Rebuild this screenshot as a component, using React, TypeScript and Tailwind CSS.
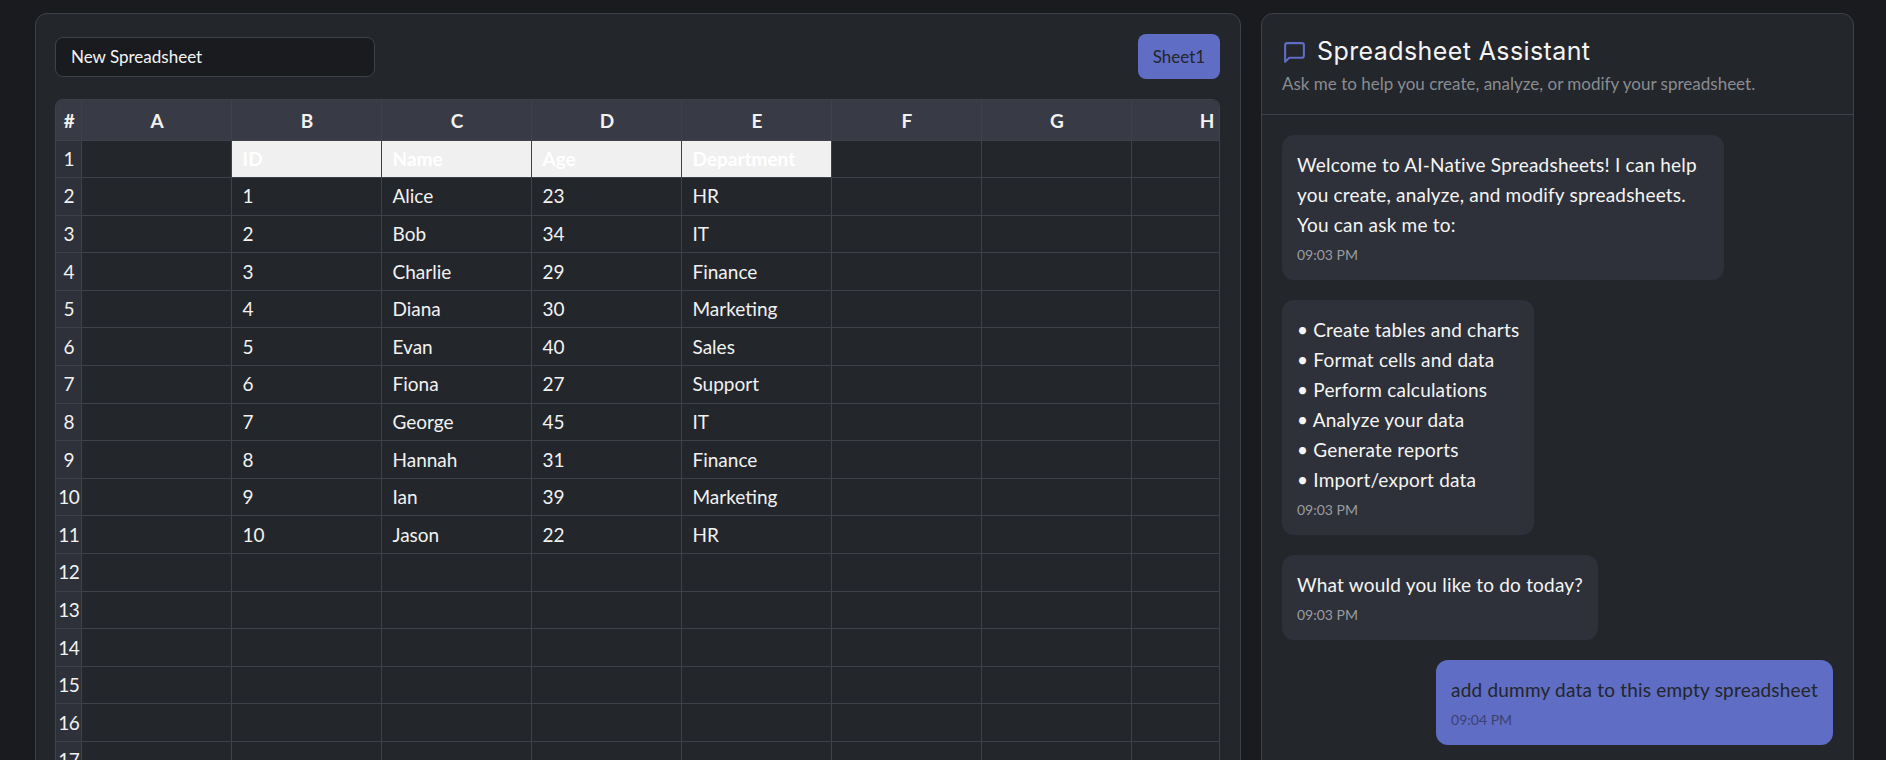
const COLS = ["A", "B", "C", "D", "E", "F", "G", "H"];

const PEOPLE = [
  ["1", "Alice", "23", "HR"],
  ["2", "Bob", "34", "IT"],
  ["3", "Charlie", "29", "Finance"],
  ["4", "Diana", "30", "Marketing"],
  ["5", "Evan", "40", "Sales"],
  ["6", "Fiona", "27", "Support"],
  ["7", "George", "45", "IT"],
  ["8", "Hannah", "31", "Finance"],
  ["9", "Ian", "39", "Marketing"],
  ["10", "Jason", "22", "HR"],
];

const HEADINGS = ["ID", "Name", "Age", "Department"];
const TOTAL_ROWS = 17;

function cellsFor(row: number): string[] {
  if (row === 1) return ["", ...HEADINGS, "", "", ""];
  const person = PEOPLE[row - 2];
  return person ? ["", ...person, "", "", ""] : ["", "", "", "", "", "", "", ""];
}

function Sheet() {
  const rows = Array.from({ length: TOTAL_ROWS }, (_, i) => i + 1);
  return (
    <div className="mt-5 overflow-hidden rounded-t-lg border border-b-0 border-[#3e414a]">
      <table className="w-[1225px] table-fixed border-collapse text-[19px] leading-6 text-[#f2f2f2]">
        <colgroup>
          <col className="w-[25px]" />
          {COLS.map((c) => (
            <col key={c} className="w-[150px]" />
          ))}
        </colgroup>
        <thead>
          <tr className="h-[40px] bg-[#383b45]">
            <th className="border-r border-b border-[#3e414a] pt-[2px] pr-0 pb-0 pl-[2px] text-center font-bold">#</th>
            {COLS.map((c) => (
              <th key={c} className="border-r border-b border-[#3e414a] pt-[2px] pr-0 pb-0 pl-[2px] text-center font-bold">
                {c}
              </th>
            ))}
          </tr>
        </thead>
        <tbody>
          {rows.map((row) => (
            <tr key={row} className="h-[37.6px]">
              <td className="border-r border-b border-[#3e414a] bg-[#2e3139] py-0 pr-0 pl-[1px] text-center tracking-[-0.5px]">
                {row}
              </td>
              {cellsFor(row).map((text, i) => {
                const isHeading = row === 1 && text !== "";
                return (
                  <td
                    key={i}
                    className={
                      isHeading
                        ? "border-r border-b border-[#3e414a] bg-[#f0f0f0] px-[11px] py-0 font-bold text-white"
                        : "border-r border-b border-[#3e414a] px-[11px] py-0"
                    }
                  >
                    {text}
                  </td>
                );
              })}
            </tr>
          ))}
        </tbody>
      </table>
    </div>
  );
}

function Bubble({ time, mine, children }: { time: string; mine?: boolean; children: React.ReactNode }) {
  return (
    <div
      className={
        mine
          ? "self-end rounded-xl bg-[#5f6dc4] p-[15px] text-[#23262b]"
          : "self-start rounded-xl bg-[#2e3139] p-[15px] text-[#f5f5f5]"
      }
    >
      <div className="text-[19px] leading-[30px] tracking-[0.2px]">{children}</div>
      <div className={mine ? "mt-[5px] text-[14px] leading-5 text-[#3c4272]" : "mt-[5px] text-[14px] leading-5 text-[#9a9ca1]"}>
        {time}
      </div>
    </div>
  );
}

export default function App() {
  return (
    <div className="flex h-[760px] items-start gap-[20px] overflow-hidden bg-[#191b1f] pt-[13px] pl-[35px] font-['Lato',sans-serif]">
      {/* sheet */}
      <section className="h-[900px] w-[1206px] shrink-0 rounded-xl border border-[#3e414a] bg-[#23262b] pt-5 pr-5 pl-[19px]">
        <div className="flex items-center justify-between">
          <input
            readOnly
            value="New Spreadsheet"
            className="h-10 w-[320px] rounded-lg border border-[#3e414a] bg-[#191b1f] px-[15px] text-[17px] text-[#f5f5f5] outline-none"
          />
          <button className="h-[45px] w-[82px] rounded-lg bg-[#5f6dc4] text-[17px] text-[#23262b]">Sheet1</button>
        </div>
        <Sheet />
      </section>

      {/* assistant */}
      <aside className="h-[900px] w-[593px] shrink-0 rounded-xl border border-[#3e414a] bg-[#23262b]">
        <header className="h-[101px] border-b border-[#3e414a] px-5 pt-5">
          <div className="flex h-9 items-center gap-[10px]">
            <svg
              viewBox="0 0 24 24"
              fill="none"
              stroke="currentColor"
              strokeWidth={2}
              strokeLinecap="round"
              strokeLinejoin="round"
              className="h-[25px] w-[25px] shrink-0 text-[#5f6dc4]"
            >
              <path d="M21 15a2 2 0 0 1-2 2H7l-4 4V5a2 2 0 0 1 2-2h14a2 2 0 0 1 2 2z" />
            </svg>
            <h2 className="font-['Inter',sans-serif] text-[25px] font-normal tracking-[0.4px] text-[#f5f5f5]">
              Spreadsheet Assistant
            </h2>
          </div>
          <p className="mt-[2px] text-[17px] leading-6 text-[#8a8c91]">
            Ask me to help you create, analyze, or modify your spreadsheet.
          </p>
        </header>
        <div className="flex flex-col gap-5 px-5 pt-5">
          <Bubble time="09:03 PM">
            <div className="w-[412px]">
              Welcome to AI-Native Spreadsheets! I can help you create, analyze, and modify spreadsheets. You can ask me
              to:
            </div>
          </Bubble>
          <Bubble time="09:03 PM">
            <div>• Create tables and charts</div>
            <div>• Format cells and data</div>
            <div>• Perform calculations</div>
            <div>• Analyze your data</div>
            <div>• Generate reports</div>
            <div>• Import/export data</div>
          </Bubble>
          <Bubble time="09:03 PM">What would you like to do today?</Bubble>
          <Bubble time="09:04 PM" mine>
            add dummy data to this empty spreadsheet
          </Bubble>
        </div>
      </aside>
    </div>
  );
}
